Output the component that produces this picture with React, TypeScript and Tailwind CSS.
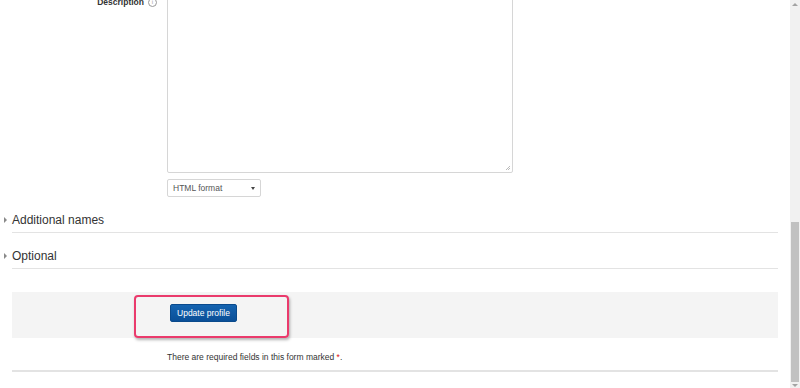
import React from 'react';

const Section: React.FC<{ title: string; className?: string }> = ({ title, className }) => (
  <div className={`flex items-center h-[25px] border-b border-[#e3e3e3] ${className ?? ''}`}>
    <div className="-ml-[8px] w-[8px] flex items-center">
      <span className="block w-0 h-0 border-y-[3px] border-y-transparent border-l-[3px] border-l-[#8a8a8a]" />
    </div>
    <span className="text-[12px] leading-[24px] text-[#333]">{title}</span>
  </div>
);

const App: React.FC = () => (
  <div
    className="w-[800px] h-[388px] bg-white flex overflow-hidden text-[#333]"
    style={{ fontFamily: '"Liberation Sans", Arial, sans-serif' }}
  >
    <div className="w-[790px] pl-[12px] pr-[12px]">
      {/* Description row */}
      <div className="flex -mt-[12px]">
        <div className="w-[155px] flex justify-end items-start pt-[8px] pr-[10px] gap-[4px]">
          <span className="text-[8.5px] leading-[12px] font-bold text-[#333]">Description</span>
          <span className="w-[9px] h-[9px] mt-[2px] rounded-full border border-[#999] text-[#999] text-[6px] leading-[7px] flex items-center justify-center">
            i
          </span>
        </div>
        <div className="relative w-[346px] h-[185px] border border-[#d6d6d6] rounded-[2px]">
          <svg className="absolute right-[1px] bottom-[1px]" width="6" height="6" viewBox="0 0 6 6">
            <path d="M5 1 L1 5 M5 3 L3 5" stroke="#aaa" strokeWidth="0.8" />
          </svg>
        </div>
      </div>

      {/* Format select */}
      <div className="pl-[155px] mt-[6px]">
        <div className="w-[94px] h-[18px] border border-[#d6d6d6] rounded-[2px] flex items-center justify-between pl-[5px] pr-[5px]">
          <span className="text-[8.5px] text-[#555]">HTML format</span>
          <span className="w-0 h-0 border-x-[2px] border-x-transparent border-t-[3px] border-t-[#444]" />
        </div>
      </div>

      <Section title="Additional names" className="mt-[11px]" />
      <Section title="Optional" className="mt-[11px]" />

      {/* Submit band */}
      <div className="relative mt-[23px] h-[46px] bg-[#f4f4f4] pl-[158px] pt-[12px] flex items-start">
        <button className="w-[67px] h-[18px] rounded-[2px] bg-gradient-to-b from-[#1463b0] to-[#0a4f98] border border-[#0a4a8c] text-white text-[8.5px] leading-[16px]">
          Update profile
        </button>
        <div className="absolute left-[122px] top-[3px] w-[155px] h-[43px] rounded-[4px] border-2 border-[#ea3a6c] shadow-[1px_2px_3px_rgba(0,0,0,0.3)]" />
      </div>

      <div className="pl-[155px] mt-[13px] text-[8.5px] leading-[12px] text-[#333]">
        There are required fields in this form marked <span className="text-[#d11]">*</span>.
      </div>

      <div className="mt-[7px] h-[2px] bg-[#e3e3e3]" />
    </div>

    {/* Scrollbar */}
    <div className="w-[10px] h-full bg-[#f1f1f1] flex flex-col items-center">
      <div className="h-[9px] flex items-center justify-center">
        <span className="w-0 h-0 border-x-[3px] border-x-transparent border-b-[3px] border-b-[#a3a3a3]" />
      </div>
      <div className="flex-1 w-full flex flex-col justify-end">
        <div className="mx-[1px] h-[160px] bg-[#c1c1c1]" />
      </div>
      <div className="h-[6px] flex items-center justify-center">
        <span className="w-0 h-0 border-x-[3px] border-x-transparent border-t-[3px] border-t-[#a3a3a3]" />
      </div>
    </div>
  </div>
);

export default App;
